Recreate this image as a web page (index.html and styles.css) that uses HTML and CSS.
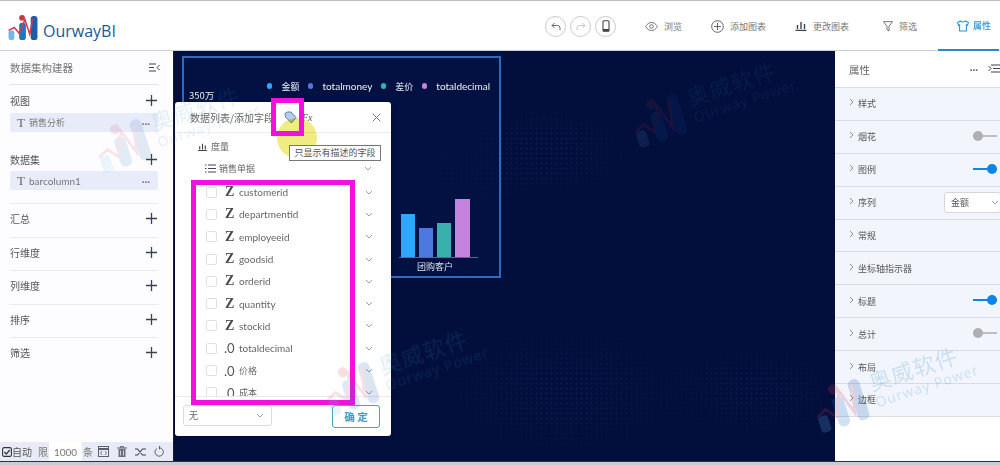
FILE: index.html
```html
<!DOCTYPE html>
<html lang="zh">
<head>
<meta charset="utf-8">
<title>OurwayBI</title>
<link rel="stylesheet" href="styles.css">
</head>
<body>
<svg class="defs" width="0" height="0">
  <symbol id="logo" viewBox="0 0 32 28">
    <rect x="1" y="17" width="6" height="10" rx="2" fill="#6cb9ea"/>
    <rect x="12" y="9" width="7" height="18" rx="3" fill="#1d78c4"/>
    <circle cx="15" cy="4" r="3" fill="#c9374a"/>
    <rect x="24" y="2" width="7" height="25" rx="3" fill="#1b5ea8"/>
    <path d="M1 17 L7 14 L12 20 L18 6 L23 21 L26 5" fill="none" stroke="#d33a4c" stroke-width="1.6"/>
  </symbol>
  <symbol id="plus" viewBox="0 0 11 11"><path d="M5.5 0v11M0 5.5h11" stroke="#3b4150" stroke-width="1.3" fill="none"/></symbol>
  <symbol id="chev" viewBox="0 0 8 5"><path d="M1 1l3 3 3-3" fill="none" stroke="#9aa0ab" stroke-width="1"/></symbol>
  <symbol id="chevr" viewBox="0 0 5 8"><path d="M1 1l3 3-3 3" fill="none" stroke="#8a8f99" stroke-width="1"/></symbol>
  <symbol id="bars" viewBox="0 0 11 10"><path d="M0 9.5h11M2 8V4M5.5 8V1M9 8V3" stroke="#3d4352" stroke-width="1.4" fill="none"/></symbol>
</svg>

<div class="app">
  <header class="topbar">
    <div class="brand">
      <svg class="brand-logo"><use href="#logo"/></svg>
      <span class="brand-name">OurwayBI</span>
    </div>
    <div class="round-group">
      <span class="round"><svg width="10" height="9" viewBox="0 0 10 9"><path d="M3.5 1L1 3.5 3.5 6M1 3.5h5.5a2.5 2.5 0 012.5 2.5V8" fill="none" stroke="#666" stroke-width="1"/></svg></span>
      <span class="round"><svg width="10" height="9" viewBox="0 0 10 9"><path d="M6.5 1L9 3.5 6.5 6M9 3.5H3.5A2.5 2.5 0 001 6v2" fill="none" stroke="#c4c4c4" stroke-width="1"/></svg></span>
      <span class="round"><svg width="8" height="12" viewBox="0 0 8 12"><rect x="1" y=".7" width="6" height="10.6" rx="1" fill="none" stroke="#444" stroke-width="1.1"/><path d="M1 9h6v2.3H1z" fill="#444"/></svg></span>
    </div>
    <nav class="nav">
      <a class="nav-item nav-view"><svg width="13" height="9" viewBox="0 0 13 9"><path d="M.5 4.5C2.5 1.5 4.5.5 6.5.5s4 1 6 4c-2 3-4 4-6 4s-4-1-6-4z" fill="none" stroke="#666" stroke-width=".9"/><circle cx="6.500" cy="4.500" r="1.800" fill="none" stroke="#666" stroke-width=".9"/></svg>浏览</a>
      <a class="nav-item nav-add"><svg width="13" height="13" viewBox="0 0 13 13"><circle cx="6.500" cy="6.500" r="5.800" fill="none" stroke="#555" stroke-width=".9"/><path d="M6.500 3v7M3 6.500h7" stroke="#555" stroke-width=".9"/></svg>添加图表</a>
      <a class="nav-item nav-change"><svg width="12" height="10"><use href="#bars"/></svg>更改图表</a>
      <a class="nav-item nav-filter"><svg width="10" height="11" viewBox="0 0 10 11"><path d="M.5.7h9L6 5.300V10L4 8.800V5.300z" fill="none" stroke="#666" stroke-width=".9"/></svg>筛选</a>
      <a class="nav-item nav-prop is-active"><svg width="12" height="12" viewBox="0 0 12 12"><path d="M3.500 1L.6 2.600 1.500 5.200 2.600 4.800V11h6.800V4.800l1.100.4.900-2.600L8.500 1C8 2.400 4 2.400 3.500 1z" fill="none" stroke="#2b93d8" stroke-width="1.100"/></svg>属性</a>
    </nav>
  </header>

  <div class="workspace">
    <aside class="left">
      <div class="left-head">
        <span>数据集构建器</span>
        <svg width="11" height="9" viewBox="0 0 11 9"><path d="M0 1h7M0 4.500h5M0 8h7M10.500 2L8 4.500l2.500 2.500" fill="none" stroke="#3d4352" stroke-width="1"/></svg>
      </div>
      <section class="group group-item">
        <div class="group-title"><span>视图</span><svg class="plus"><use href="#plus"/></svg></div>
        <div class="chip"><b class="chip-t">T</b><span class="chip-name cn">销售分析</span><i class="chip-more">···</i></div>
      </section>
      <section class="group group-item group-last">
        <div class="group-title"><span>数据集</span><svg class="plus"><use href="#plus"/></svg></div>
        <div class="chip"><b class="chip-t">T</b><span class="chip-name">barcolumn1</span><i class="chip-more">···</i></div>
      </section>
      <section class="group"><div class="group-title"><span>汇总</span><svg class="plus"><use href="#plus"/></svg></div></section>
      <section class="group"><div class="group-title"><span>行维度</span><svg class="plus"><use href="#plus"/></svg></div></section>
      <section class="group"><div class="group-title"><span>列维度</span><svg class="plus"><use href="#plus"/></svg></div></section>
      <section class="group"><div class="group-title"><span>排序</span><svg class="plus"><use href="#plus"/></svg></div></section>
      <section class="group"><div class="group-title"><span>筛选</span><svg class="plus"><use href="#plus"/></svg></div></section>
      <div class="left-foot">
        <svg width="10" height="10" viewBox="0 0 10 10"><rect x=".6" y=".6" width="8.800" height="8.800" rx="1.500" fill="none" stroke="#333" stroke-width="1.100"/><path d="M2.300 5l2 2 3.500-4" fill="none" stroke="#333" stroke-width="1.200"/></svg>
        <span class="foot-auto">自动</span><span class="foot-limit">限</span>
        <span class="foot-input">1000</span><span class="foot-unit">条</span>
        <svg width="11" height="11" viewBox="0 0 11 11"><rect x=".5" y=".5" width="10" height="10" fill="none" stroke="#5a6070"/><path d="M.5 3h10" stroke="#5a6070" stroke-width="2"/><path d="M4 5L2.500 7 4 9M7 5l1.500 2L7 9" fill="none" stroke="#5a6070" stroke-width=".8"/></svg>
        <svg width="10" height="11" viewBox="0 0 10 11"><path d="M0 2h10M3.500 2V.6h3V2" fill="none" stroke="#5a6070"/><path d="M1.500 3h7v8h-7z" fill="#6b7080"/><path d="M3.500 4.500v5M6.500 4.500v5" stroke="#e8ebf5" stroke-width=".8"/></svg>
        <svg width="11" height="10" viewBox="0 0 11 10"><path d="M0 2h2.500l5 6H11M0 8h2.500l5-6H11" fill="none" stroke="#3d4352" stroke-width="1.100"/></svg>
        <svg width="10" height="11" viewBox="0 0 10 11"><path d="M3 2.400A4.200 4.200 0 105.500 1.800M5.500 0v3.400" fill="none" stroke="#5a6070" stroke-width="1"/></svg>
      </div>
    </aside>

    <main class="canvas">
      <div class="dotmap"></div>
      <div class="chart-card">
        <div class="legend">
          <span class="lg cn"><i class="dot d1"></i>金额</span>
          <span class="lg"><i class="dot d2"></i>totalmoney</span>
          <span class="lg cn"><i class="dot d3"></i>差价</span>
          <span class="lg"><i class="dot d4"></i>totaldecimal</span>
        </div>
        <div class="ytick">350万</div>
        <div class="plot">
          <div class="bars">
            <i class="bar b1"></i><i class="bar b2"></i><i class="bar b3"></i><i class="bar b4"></i>
          </div>
          <div class="xlabel">团购客户</div>
        </div>
      </div>

      <div class="popup">
        <div class="popup-head">
          <span class="popup-title">数据列表/添加字段</span>
          <svg class="tag" width="13" height="13" viewBox="0 0 13 13"><path d="M1 2.500L3.500 1H7l5 5.500L7.500 12 1.500 6z" fill="#b8cdf0" stroke="#5c7fb8" stroke-width="1"/></svg>
          <span class="fx">Fx</span>
          <svg class="close" width="9" height="9" viewBox="0 0 9 9"><path d="M.7.7l7.600 7.600M8.300.7L.7 8.300" stroke="#777" stroke-width="1"/></svg>
        </div>
        <div class="tree-row tree-measure"><svg width="9" height="8" viewBox="0 0 11 10"><use href="#bars"/></svg>度量</div>
        <div class="tree-row tree-table">
          <svg width="11" height="9" viewBox="0 0 11 9"><path d="M3 1h8M3 4.500h8M3 8h8M0 1h1.500M0 4.500h1.500M0 8h1.500" stroke="#3d4352" stroke-width="1"/></svg>
          <span class="grow">销售单据</span>
          <svg class="up" width="8" height="5"><use href="#chev"/></svg>
        </div>
        <ul class="fields">
          <li class="field"><i class="check"></i><b class="ftype">Z</b><span class="fname">customerid</span><svg width="8" height="5"><use href="#chev"/></svg></li>
          <li class="field"><i class="check"></i><b class="ftype">Z</b><span class="fname">departmentid</span><svg width="8" height="5"><use href="#chev"/></svg></li>
          <li class="field"><i class="check"></i><b class="ftype">Z</b><span class="fname">employeeid</span><svg width="8" height="5"><use href="#chev"/></svg></li>
          <li class="field"><i class="check"></i><b class="ftype">Z</b><span class="fname">goodsid</span><svg width="8" height="5"><use href="#chev"/></svg></li>
          <li class="field"><i class="check"></i><b class="ftype">Z</b><span class="fname">orderid</span><svg width="8" height="5"><use href="#chev"/></svg></li>
          <li class="field"><i class="check"></i><b class="ftype">Z</b><span class="fname">quantity</span><svg width="8" height="5"><use href="#chev"/></svg></li>
          <li class="field"><i class="check"></i><b class="ftype">Z</b><span class="fname">stockid</span><svg width="8" height="5"><use href="#chev"/></svg></li>
          <li class="field"><i class="check"></i><b class="ftype num">.0</b><span class="fname">totaldecimal</span><svg width="8" height="5"><use href="#chev"/></svg></li>
          <li class="field"><i class="check"></i><b class="ftype num">.0</b><span class="fname cn">价格</span><svg width="8" height="5"><use href="#chev"/></svg></li>
          <li class="field"><i class="check"></i><b class="ftype num">.0</b><span class="fname cn">成本</span><svg width="8" height="5"><use href="#chev"/></svg></li>
        </ul>
        <div class="popup-foot">
          <div class="select"><span>无</span><svg width="8" height="5"><use href="#chev"/></svg></div>
          <button class="ok">确 定</button>
        </div>
      </div>

      <div class="highlight"></div>
      <div class="tooltip">只显示有描述的字段</div>
      <div class="mark mark-tag"></div>
      <div class="mark mark-list"></div>
    </main>

    <aside class="right">
      <div class="right-head">
        <span>属性</span>
        <i class="right-more">···</i>
        <svg width="12" height="9" viewBox="0 0 12 9"><path d="M3 1h9M5 4.500h7M3 8h9M.5 2L3 4.500.5 7" fill="none" stroke="#3d4352" stroke-width="1"/></svg>
      </div>
      <div class="prop"><svg class="cr"><use href="#chevr"/></svg><span>样式</span></div>
      <div class="prop"><svg class="cr"><use href="#chevr"/></svg><span>烟花</span><i class="toggle off"></i></div>
      <div class="prop"><svg class="cr"><use href="#chevr"/></svg><span>图例</span><i class="toggle on"></i></div>
      <div class="prop"><svg class="cr"><use href="#chevr"/></svg><span>序列</span><div class="prop-select"><span>金额</span><svg width="8" height="5"><use href="#chev"/></svg></div></div>
      <div class="prop"><svg class="cr"><use href="#chevr"/></svg><span>常规</span></div>
      <div class="prop"><svg class="cr"><use href="#chevr"/></svg><span>坐标轴指示器</span></div>
      <div class="prop"><svg class="cr"><use href="#chevr"/></svg><span>标题</span><i class="toggle on"></i></div>
      <div class="prop"><svg class="cr"><use href="#chevr"/></svg><span>总计</span><i class="toggle off"></i></div>
      <div class="prop"><svg class="cr"><use href="#chevr"/></svg><span>布局</span></div>
      <div class="prop"><svg class="cr"><use href="#chevr"/></svg><span>边框</span></div>
    </aside>
  </div>
  <div class="bottom-edge"></div>

  <div class="wm wm-left"><svg class="wm-logo"><use href="#logo"/></svg><div class="wm-text"><span class="wm-cn">奥威软件</span><span class="wm-en">Ourway Power</span></div></div>
  <div class="wm wm-center"><svg class="wm-logo"><use href="#logo"/></svg><div class="wm-text"><span class="wm-cn">奥威软件</span><span class="wm-en">Ourway Power</span></div></div>
  <div class="wm wm-pop"><svg class="wm-logo"><use href="#logo"/></svg><div class="wm-text"><span class="wm-cn">奥威软件</span><span class="wm-en">Ourway Power</span></div></div>
  <div class="wm wm-right"><svg class="wm-logo"><use href="#logo"/></svg><div class="wm-text"><span class="wm-cn">奥威软件</span><span class="wm-en">Ourway Power</span></div></div>
</div>
</body>
</html>
```
FILE: styles.css
```css
* { box-sizing: border-box; }
html, body { margin: 0; height: 100%; overflow: hidden; background: #fff; }
body { font-family: "Noto Sans CJK SC", "Liberation Sans", sans-serif; font-size: 10px; color: #555; }
.defs { position: absolute; }
.app { position: relative; width: 1000px; height: 465px; display: flex; flex-direction: column; overflow: hidden; filter: blur(.35px); }

/* top bar */
.topbar { height: 51px; flex: none; display: flex; align-items: center; background: #fff; border-top: 1px solid #bdbdbd; box-shadow: inset 0 -1px 0 #c9cfdc; }
.brand { width: 208px; flex: none; display: flex; align-items: center; padding: 8px 0 0 7px; gap: 4px; }
.brand-logo { width: 32px; height: 27px; margin-top: -6px; }
.brand-name { font: 16px "Open Sans", sans-serif; color: #1b5a96; margin-top: 1px; }
.round-group { margin-left: 337px; display: flex; gap: 4px; flex: none; }
.round { width: 21px; height: 21px; border: 1px solid #c9c9c9; border-radius: 50%; display: flex; align-items: center; justify-content: center; }
.nav { flex: 1; display: flex; height: 100%; align-items: center; white-space: nowrap; }
.nav-item { display: flex; align-items: center; gap: 6px; font-size: 9px; color: #777; flex: none; }
.nav-view { margin-left: 29px; }
.nav-add { margin-left: 29px; }
.nav-change { margin-left: 29px; }
.nav-filter { margin-left: 34px; }
.nav-prop { margin-left: 21px; width: 61px; height: 100%; padding-left: 19px; gap: 4px; }
.is-active { color: #2b93d8; font-weight: 500; border-bottom: 2px solid #2b8ac4; padding-top: 1px; }

.workspace { flex: 1; display: flex; min-height: 0; }

/* left */
.left { width: 174px; flex: none; display: flex; flex-direction: column; background: #fdfdff; border-right: 1px solid #1b1f2c; }
.left-head { height: 33px; display: flex; align-items: center; justify-content: space-between; margin: 0 13px 0 10px; font-size: 10.500px; color: #777; }
.group { height: 33.500px; margin: 0 15px 0 10px; border-top: 1px solid #e9ebf0; color: #555; font-size: 10px; }
.group-item { height: 59px; border-top: 1px solid #dfe2e8; }
.group-last { height: 60px; border-top: 0; }
.group-title { display: flex; height: 29px; padding: 0 1px 0 0; align-items: center; justify-content: space-between; }
.group-item .group-title { height: 28px; padding-top: 2px; }
.group-last .group-title { height: 28px; padding-top: 4px; }
.plus { width: 11px; height: 11px; }
.chip { height: 19px; background: #e8ecfa; border-radius: 2px; display: flex; align-items: center; padding: 0 8px 0 7px; }
.chip-t { font: 400 13px "Liberation Serif", serif; color: #666; width: 12px; }
.chip-name { flex: 1; font: 10px "Lato", "Noto Sans CJK SC", sans-serif; color: #777; }
.chip-name.cn { font-size: 9px; }
.chip-more { font: 700 10px "Lato", sans-serif; color: #777; }
.left-foot { margin-top: auto; height: 19px; background: #e8ebf5; display: flex; align-items: center; padding-left: 2px; font-size: 10px; color: #555; }
.foot-limit { margin-left: 6px; color: #777; }
.foot-input { width: 33px; height: 19px; margin-left: 1px; background: #fff; font: 10px "Lato", sans-serif; display: flex; align-items: center; justify-content: center; color: #777; flex: none; }
.foot-unit { margin-left: 1px; margin-right: 5px; color: #777; }
.left-foot svg { flex: none; }
.left-foot svg + svg { margin-left: 8px; }

/* canvas */
.canvas { position: relative; flex: 1; background: #020e3c; overflow: hidden; min-width: 0; }
.dotmap { position: absolute; inset: 0; background-image: radial-gradient(circle, #1c2f66 1px, transparent 1.300px); background-size: 5px 5px;
  -webkit-mask-image: radial-gradient(ellipse 90px 50px at 370px 100px, #000 20%, transparent 100%), radial-gradient(ellipse 130px 70px at 390px 340px, #000 10%, transparent 100%), radial-gradient(ellipse 60px 40px at 300px 120px, #000 0, transparent 100%), radial-gradient(ellipse 100px 50px at 580px 340px, #000 0, transparent 100%);
  mask-image: radial-gradient(ellipse 90px 50px at 370px 100px, #000 20%, transparent 100%), radial-gradient(ellipse 130px 70px at 390px 340px, #000 10%, transparent 100%), radial-gradient(ellipse 60px 40px at 300px 120px, #000 0, transparent 100%), radial-gradient(ellipse 100px 50px at 580px 340px, #000 0, transparent 100%); opacity: .35; }
.chart-card { position: absolute; left: 8px; top: 5px; width: 319px; height: 222px; border: 2px solid #2c6cc0; background: rgba(3, 19, 68, .75); }
.legend { display: flex; justify-content: flex-end; gap: 8.500px; padding: 22px 9px 0 0; font: 400 10px "Lato", "Noto Sans CJK SC", sans-serif; color: #eef1f7; height: 34px; }
.lg { display: flex; align-items: center; gap: 9px; height: 12px; }
.lg.cn { font-size: 9px; }
.dot { width: 5.500px; height: 5.500px; border-radius: 50%; flex: none; }
.d1 { background: #2ea8ff; } .d2 { background: #4d78e0; } .d3 { background: #38b0ae; } .d4 { background: #c583de; }
.ytick { margin: -4px 0 0 5px; font-size: 9.500px; color: #e5e7ee; }
.plot { position: absolute; left: 215px; top: 142px; width: 79px; }
.bars { height: 58px; display: flex; align-items: flex-end; gap: 4px; border-bottom: 1px solid #4d6a96; padding-left: 2px; }
.bar { width: 14px; display: block; }
.b1 { height: 43px; background: #2ea8ff; }
.b2 { height: 29px; background: #4d78e0; }
.b3 { height: 34px; background: #38b0ae; }
.b4 { height: 58px; background: #c583de; width: 15px; }
.xlabel { text-align: center; width: 72px; font-size: 9px; color: #dfe3ec; margin-top: 2px; }

.highlight { position: absolute; left: 103px; top: 67px; width: 40px; height: 40px; border-radius: 50%; background: #efe96a; mix-blend-mode: multiply; opacity: .85; }

/* popup */
.popup { position: absolute; left: 1px; top: 51px; width: 216px; height: 334px; background: #fff; border-radius: 3px; display: flex; flex-direction: column; box-shadow: 0 0 4px rgba(0,0,0,.25); }
.popup-head { height: 31px; flex: none; display: flex; align-items: center; padding: 1px 10px 0 15px; font-size: 10px; color: #666; border-bottom: 1px solid #eceef2; }
.popup-title { width: 93px; white-space: nowrap; }
.tag { margin-left: 1px; }
.fx { font: italic 10px "Liberation Serif", serif; color: #555; margin-left: 5px; flex: 1; }
.tree-row { display: flex; align-items: center; flex: none; font-size: 9px; color: #666; }
.tree-measure { height: 23px; padding: 4px 0 0 23px; gap: 4px; }
.tree-table { height: 24px; padding: 0 19px 0 30px; gap: 3px; }
.grow { flex: 1; }
.fields { list-style: none; margin: 0; padding: 1px 0 0; flex: 1; overflow: hidden; min-height: 0; }
.field { height: 22.300px; display: flex; align-items: center; padding: 0 18px 0 31px; }
.check { width: 11px; height: 11px; border: 1px solid #dfe1e7; border-radius: 2px; flex: none; }
.ftype { width: 14px; margin-left: 8px; font: 700 14px "Liberation Serif", serif; color: #4a4a4a; flex: none; line-height: 1; }
.ftype.num { font: 400 13px "Lato", sans-serif; color: #555; margin-left: 7px; width: 15px; }
.fname { flex: 1; font: 10px "Lato", "Noto Sans CJK SC", sans-serif; color: #666; }
.fname.cn { font-size: 9px; }
.popup-foot { height: 40px; flex: none; border-top: 1px solid #e7e9ee; display: flex; justify-content: space-between; padding: 8px 11px 0 8px; }
.select { width: 89px; height: 21px; border: 1px solid #d9dce2; border-radius: 3px; display: flex; align-items: center; justify-content: space-between; padding: 0 7px 0 5px; color: #666; font-size: 9px; }
.ok { width: 48px; height: 23px; border: 1px solid #4e9fc4; border-radius: 3px; background: #fff; color: #3d9bc9; font: 700 10.500px "Noto Sans CJK SC", sans-serif; padding: 0; }
.tooltip { position: absolute; left: 115px; top: 94px; width: 92px; height: 16px; border: 1px solid #777; background: #fff; color: #555; font-size: 9px; line-height: 14px; white-space: nowrap; text-align: center; }
.mark { position: absolute; border: 5px solid #f30fe0; }
.mark-tag { left: 97px; top: 47px; width: 33px; height: 38px; }
.mark-list { left: 17px; top: 129px; width: 164px; height: 225px; }

/* right */
.right { width: 165px; flex: none; background: #fff; display: flex; flex-direction: column; font-size: 9px; color: #555; }
.right-head { height: 37px; flex: none; display: flex; align-items: center; padding-left: 14px; font-size: 10.500px; color: #666; border-bottom: 1px solid #d8dbe2; overflow: hidden; }
.right-more { margin-left: auto; margin-right: 10px; font: 700 10px "Lato", sans-serif; }
.right-head svg { flex: none; margin-top: -2px; }
.prop { height: 32.900px; flex: none; display: flex; align-items: center; padding-left: 14px; background: #f3f5fd; border-bottom: 1px solid #d8dbe2; }
.cr { width: 5px; height: 8px; margin-right: 4px; margin-top: -3px; flex: none; }
.toggle { margin-left: auto; margin-right: 3px; width: 24px; height: 2px; position: relative; display: block; margin-top: -2px; }
.toggle::after { content: ""; position: absolute; top: -4px; width: 10px; height: 10px; border-radius: 50%; }
.toggle.off { background: #bdbdc2; }
.toggle.off::after { left: 0; background: #aeaeb3; }
.toggle.on { background: #0d84e8; }
.toggle.on::after { right: 0; background: #0d84e8; }
.prop-select { margin-left: auto; width: 57px; height: 21px; margin-right: -1px; border: 1px solid #d3d6dd; border-radius: 3px; background: #fff; display: flex; align-items: center; justify-content: space-between; padding: 0 1px 0 6px; margin-top: -1px; }

.bottom-edge { height: 4px; flex: none; background: linear-gradient(#2c3040 0, #2c3040 1px, #c8ccd4 1px); }

/* watermarks */
.wm { position: absolute; display: flex; gap: 8px; align-items: flex-start; transform: rotate(-18deg); pointer-events: none; opacity: .12; }
.wm-logo { width: 54px; height: 48px; }
.wm-text { display: flex; flex-direction: column; color: #2b8ac4; line-height: 1; }
.wm-cn { font-size: 22px; letter-spacing: 1px; white-space: nowrap; }
.wm-en { font: 14px "Open Sans", sans-serif; white-space: nowrap; letter-spacing: 1px; margin-top: 1px; }
.wm-left { left: 92px; top: 103px; }
.wm-center { left: 628px; top: 78px; opacity: .1; }
.wm-pop { left: 320px; top: 346px; opacity: .16; }
.wm-right { left: 810px; top: 363px; opacity: .2; }
```
